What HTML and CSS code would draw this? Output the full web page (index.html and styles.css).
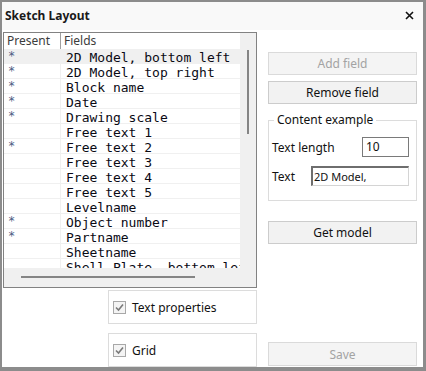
FILE: index.html
```html
<!DOCTYPE html>
<html lang="en">
<head>
  <meta charset="UTF-8" />
  <title>Sketch Layout</title>
  <link rel="stylesheet" href="styles.css">
</head>
<body>
  <div class="window">
    <div class="titlebar">
      <span class="title">Sketch Layout</span>
      <svg class="close" width="9" height="9" viewBox="0 0 9 9">
        <path d="M1 1 L8 8 M8 1 L1 8" stroke="#111" stroke-width="1.6" fill="none"/>
      </svg>
    </div>

    <div class="content">
      <div class="left">
        <div class="list">
          <div class="table">
            <div class="head">
              <div class="col-present">Present</div>
              <div class="col-fields">Fields</div>
            </div>
            <div class="row selected"><div class="mark">*</div><div class="name">2D Model, bottom left</div></div>
            <div class="row"><div class="mark">*</div><div class="name">2D Model, top right</div></div>
            <div class="row"><div class="mark">*</div><div class="name">Block name</div></div>
            <div class="row"><div class="mark">*</div><div class="name">Date</div></div>
            <div class="row"><div class="mark">*</div><div class="name">Drawing scale</div></div>
            <div class="row"><div class="mark"></div><div class="name">Free text 1</div></div>
            <div class="row"><div class="mark">*</div><div class="name">Free text 2</div></div>
            <div class="row"><div class="mark"></div><div class="name">Free text 3</div></div>
            <div class="row"><div class="mark"></div><div class="name">Free text 4</div></div>
            <div class="row"><div class="mark"></div><div class="name">Free text 5</div></div>
            <div class="row"><div class="mark"></div><div class="name">Levelname</div></div>
            <div class="row"><div class="mark">*</div><div class="name">Object number</div></div>
            <div class="row"><div class="mark">*</div><div class="name">Partname</div></div>
            <div class="row"><div class="mark"></div><div class="name">Sheetname</div></div>
            <div class="row"><div class="mark"></div><div class="name">Shell Plate, bottom left</div></div>
          </div>
          <div class="vscroll"><div class="vthumb"></div></div>
          <div class="hscroll"><div class="hthumb"></div></div>
          <div class="corner"></div>
        </div>

        <div class="option">
          <span class="checkbox">
            <svg width="9" height="9" viewBox="0 0 9 9"><path d="M1 4.5 L3.5 7 L8 1.5" stroke="#7a7a7a" stroke-width="1.6" fill="none"/></svg>
          </span>
          <span>Text properties</span>
        </div>
        <div class="option second">
          <span class="checkbox">
            <svg width="9" height="9" viewBox="0 0 9 9"><path d="M1 4.5 L3.5 7 L8 1.5" stroke="#7a7a7a" stroke-width="1.6" fill="none"/></svg>
          </span>
          <span>Grid</span>
        </div>
      </div>

      <div class="right">
        <button class="btn" disabled>Add field</button>
        <button class="btn gap">Remove field</button>

        <fieldset class="group">
          <legend>Content example</legend>
          <div class="field">
            <span>Text length</span>
            <div class="input short">10</div>
          </div>
          <div class="field">
            <span>Text</span>
            <div class="input long">2D Model,</div>
          </div>
        </fieldset>

        <button class="btn model">Get model</button>
        <button class="btn save" disabled>Save</button>
      </div>
    </div>
  </div>
</body>
</html>
```

FILE: styles.css
```css
* {
  margin: 0;
  padding: 0;
  box-sizing: border-box;
}

body {
  font-family: 'Noto Sans', 'Open Sans', sans-serif;
  font-size: 12px;
  color: #111;
  background: #fff;
}

.window {
  width: 426px;
  height: 371px;
  border: 2px solid #8c8c8c;
  border-right-width: 3px;
  border-bottom-width: 4px;
  background: #fff;
  display: flex;
  flex-direction: column;
  overflow: hidden;
}

.titlebar {
  height: 28px;
  display: flex;
  align-items: center;
  justify-content: space-between;
  padding: 0 9px 2px 3px;
  background: #f9f9f9;
}

.title {
  font-weight: bold;
  font-size: 12px;
  color: #1a1a1a;
}

.content {
  flex: 1;
  display: grid;
  grid-template-columns: 254px 149px;
  column-gap: 11px;
  padding-left: 1px;
  min-height: 0;
}

/* left column: list and checkboxes */

.left {
  padding-top: 2px;
  display: flex;
  flex-direction: column;
}

.list {
  height: 256px;
  border: 1px solid #828282;
  display: grid;
  grid-template-columns: 236px 16px;
  grid-template-rows: 235px 19px;
  background: #fff;
}

.table {
  overflow: hidden;
}

.head {
  height: 16px;
  display: flex;
  color: #3c3c3c;
  line-height: 15px;
}

.col-present {
  width: 57px;
  padding-left: 3px;
  border-right: 1px solid #a0a0a0;
}

.col-fields {
  padding-left: 3px;
}

.row {
  height: 15px;
  display: flex;
  border-bottom: 1px solid #f0f0f0;
  font-family: 'DejaVu Sans Mono', monospace;
  font-size: 13px;
  white-space: nowrap;
}

.row.selected {
  background: #f0f0f0;
}

.mark {
  width: 57px;
  flex-shrink: 0;
  padding: 1px 0 0 4px;
  color: #4c5c84;
  font-size: 12px;
  line-height: 12px;
  border-right: 1px solid #f0f0f0;
}

.name {
  padding: 2px 0 0 5px;
  line-height: 13px;
  color: #0a0a14;
}

.vscroll {
  background: #f0f0f0;
  display: flex;
  justify-content: center;
  padding-top: 17px;
}

.vthumb {
  width: 2px;
  height: 84px;
  background: #858585;
}

.hscroll {
  background: #f0f0f0;
  padding: 8px 0 0 17px;
}

.hthumb {
  width: 174px;
  height: 2px;
  background: #858585;
}

.corner {
  background: #f0f0f0;
}

.option {
  margin: 2px 0 0 105px;
  height: 34px;
  flex-shrink: 0;
  border: 1px solid #dcdcdc;
  display: flex;
  align-items: center;
  gap: 6px;
  padding-left: 4px;
  font-size: 12px;
}

.option.second {
  margin-top: 9px;
}

.checkbox {
  width: 13px;
  height: 13px;
  border: 1px solid #a8a8a8;
  background: #f4f4f4;
  display: flex;
  align-items: center;
  justify-content: center;
}

/* right column: buttons and content example */

.right {
  padding-top: 22px;
  padding-bottom: 1px;
  display: flex;
  flex-direction: column;
}

.btn {
  height: 23px;
  border: 1px solid #cccccc;
  background: #f2f2f2;
  font-family: inherit;
  font-size: 12px;
  color: #111;
}

.btn:disabled {
  background: #f4f4f4;
  border-color: #dadada;
  color: #a3a3a3;
}

.btn.gap {
  margin-top: 6px;
}

.group {
  margin-top: 8px;
  height: 89px;
  border: 1px solid #dcdcdc;
  padding: 0 7px 0 3px;
}

.group legend {
  margin-left: 2px;
  padding: 0 3px;
  line-height: 16px;
}

.field {
  display: flex;
  align-items: center;
  justify-content: space-between;
  height: 20px;
  margin-top: 9px;
}

.input {
  height: 20px;
  border: 1px solid #7a7a7a;
  background: #fff;
  padding-left: 3px;
  line-height: 17px;
}

.input.short {
  width: 47px;
}

.input.long {
  width: 98px;
  border-top: 2px solid #6e6e6e;
  border-left: 2px solid #6e6e6e;
  border-right-color: #d4d4d4;
  border-bottom-color: #d4d4d4;
  padding-left: 1px;
  font-size: 11px;
}

.btn.model {
  margin-top: 20px;
}

.btn.save {
  margin-top: auto;
  height: 24px;
}
```
